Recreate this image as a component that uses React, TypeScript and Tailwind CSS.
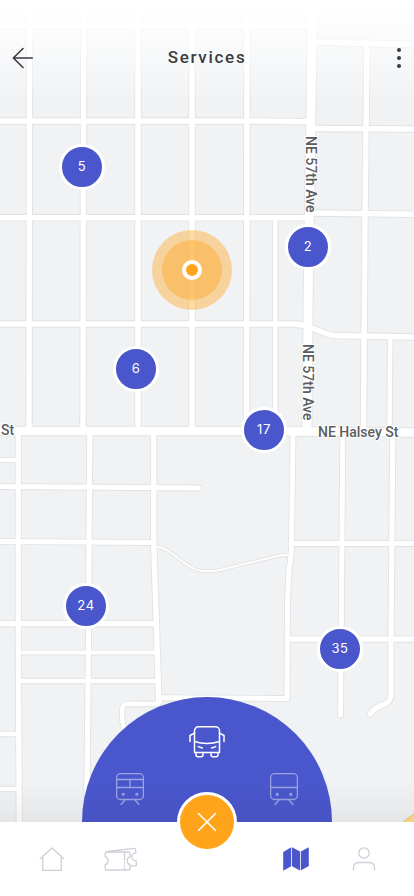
import { useState } from 'react';
import type { ReactNode } from 'react';

type Road = { d: string; width: number };

// Street centre lines, in map units
const ROADS: Road[] = [
  // upper grid, north-south
  { d: 'M29.5 0L29 431', width: 5.5 },
  { d: 'M83.7 0L83 431', width: 5.5 },
  { d: 'M138 0V431', width: 5.5 },
  { d: 'M192 0V431', width: 5.5 },
  { d: 'M247 0L246.5 431', width: 5.5 },
  { d: 'M275.2 218V431', width: 4.5 },
  { d: 'M367 43L365 215L363.5 432', width: 5.5 },
  { d: 'M390.2 337L389.5 432', width: 4.5 },
  { d: 'M312.5 0L311 110L308.5 260L307 431', width: 9 },
  // upper grid, east-west
  { d: 'M0 25.6H312', width: 5.5 },
  { d: 'M312 42L414 44.5', width: 5.5 },
  { d: 'M0 121H250L310 121.8', width: 5.5 },
  { d: 'M310 128.5L414 129', width: 5.5 },
  { d: 'M0 217.7H310', width: 5.5 },
  { d: 'M310 213L414 214.3', width: 5.5 },
  { d: 'M0 324H290Q304 324 312 328L326 333.5Q330 335.3 335 335.4L414 337', width: 5.5 },
  { d: 'M0 431L250 431L414 432.5', width: 8.5 },
  // lower left
  { d: 'M18.3 431V640L19.2 822', width: 5.2 },
  { d: 'M89.8 431L88.3 660L86.6 822', width: 5.2 },
  { d: 'M153.5 431L153.8 545L157.2 650L158.8 702', width: 5.5 },
  { d: 'M0 460H18', width: 3.8 },
  { d: 'M0 486.5L199 488', width: 5 },
  { d: 'M0 541.4L154 542.6', width: 5 },
  { d: 'M0 623.7H156', width: 5.2 },
  { d: 'M18 652.6H157', width: 4 },
  { d: 'M18 681H158', width: 4.5 },
  { d: 'M0 734H19', width: 4.5 },
  { d: 'M0 789H19', width: 4.5 },
  { d: 'M124 728Q121 718 122.5 708Q123 704 127 703.8L158 704', width: 4.5 },
  // lower right
  { d: 'M293 434L291.4 548Q291.4 556 289 570L287.5 600L287 698.5L160 697.8', width: 5 },
  { d: 'M342.8 434L340.5 715.5', width: 5 },
  { d: 'M392.8 434L391 640V694Q391 702 384 704.5Q375 707 370 714', width: 5.2 },
  { d: 'M291 543.6H414', width: 5 },
  { d: 'M288 639.2H414', width: 5.2 },
  // footpath
  { d: 'M156 547.4Q162 546.5 171 553L186 564Q197 572 208 571.3Q216 571.5 226 568.5L281 555.3L290 555', width: 2 },
];

const PINS = [
  { count: 5, x: 82, y: 167 },
  { count: 2, x: 308, y: 247 },
  { count: 6, x: 136, y: 369 },
  { count: 17, x: 264, y: 430 },
  { count: 24, x: 86, y: 606 },
  { count: 35, x: 340, y: 649 },
];

const MAP_WIDTH = 414;
const MAP_HEIGHT = 822;

function place(x: number, y: number) {
  return { left: `${(x / MAP_WIDTH) * 100}%`, top: `${(y / MAP_HEIGHT) * 100}%` };
}

function StreetMap() {
  return (
    <svg
      className="absolute inset-0 h-full w-full"
      viewBox="0 0 414 822"
      preserveAspectRatio="xMidYMid slice"
      fill="none"
      strokeLinecap="round"
      strokeLinejoin="round"
      aria-hidden="true"
    >
      <rect width="414" height="822" fill="#f0f2f4" />
      <g stroke="#e0e2e4">
        {ROADS.map((road) => (
          <path key={road.d} d={road.d} strokeWidth={road.width + 1.8} />
        ))}
      </g>
      <g stroke="#ffffff">
        {ROADS.map((road) => (
          <path key={road.d} d={road.d} strokeWidth={road.width} />
        ))}
      </g>
      <path d="M402 823L415 813V823Z" fill="#fbdf8f" stroke="#efc35c" />
      <g
        className="font-[Roboto,sans-serif] text-[14px] font-medium"
        fill="#5a5d61"
        stroke="#ffffff"
        strokeWidth="2"
        paintOrder="stroke"
      >
        <text transform="translate(306 136) rotate(90)">NE 57th Ave</text>
        <text transform="translate(303 344) rotate(90)">NE 57th Ave</text>
        <text x="318" y="437">NE Halsey St</text>
        <text x="1" y="435">St</text>
      </g>
    </svg>
  );
}

function CurrentLocation() {
  return (
    <div
      className="absolute flex size-20 -translate-1/2 items-center justify-center rounded-full bg-[#ffa41b]/40"
      style={place(192, 270)}
    >
      <div className="flex size-15 items-center justify-center rounded-full bg-[#ffa41b]/40">
        <div className="size-5 rounded-full border-4 border-white bg-[#ffa41b]" />
      </div>
    </div>
  );
}

function BusIcon() {
  return (
    <svg width="36" height="32" viewBox="0 0 36 32" fill="none" stroke="currentColor" strokeWidth="1.5" strokeLinecap="round" strokeLinejoin="round">
      <path d="M5.5 26.5V4.8A4 4 0 0 1 9.5.8h17a4 4 0 0 1 4 4v21.7z" />
      <path d="M5.5 15.5Q18 19.5 30.5 15.5" />
      <path d="M5.5 7.2L1 9.5V15.5M30.5 7.2L35 9.5V15.5" />
      <path d="M9.3 20.6l4 1.4M26.7 20.6l-4 1.4" />
      <path d="M7 26.5v2.3a2 2 0 0 0 2 2h3a2 2 0 0 0 2-2v-2.3M22 26.5v2.3a2 2 0 0 0 2 2h3a2 2 0 0 0 2-2v-2.3" />
    </svg>
  );
}

function TramIcon({ split = false }: { split?: boolean }) {
  return (
    <svg width="28" height="32" viewBox="0 0 28 32" fill="none" stroke="currentColor" strokeWidth="1.3" strokeLinecap="round">
      <rect x=".6" y=".7" width="26.8" height="25.8" rx="4" />
      <path d="M.6 14.5h26.8" />
      {split && <path d="M.6 6.5h26.8M14 6.5v8" />}
      <path d="M9 27l-4 4.5M19 27l4 4.5" />
      <circle cx="7.2" cy="21.2" r="1.5" fill="currentColor" stroke="none" />
      <circle cx="20.8" cy="21.2" r="1.5" fill="currentColor" stroke="none" />
    </svg>
  );
}

function HomeIcon() {
  return (
    <svg width="26" height="24" viewBox="0 0 26 24" fill="none" stroke="currentColor" strokeWidth="1.3" strokeLinecap="round" strokeLinejoin="round">
      <path d="M1.2 11.7L13 .9l11.8 10.8M3.7 9.5v13.8h18.6V9.5" />
    </svg>
  );
}

function TicketsIcon() {
  return (
    <svg width="34" height="24" viewBox="0 0 34 24" fill="none" stroke="currentColor" strokeWidth="1.3" strokeLinecap="round" strokeLinejoin="round">
      <path d="M3.5 5h22.2a1.3 1.3 0 0 1 1.3 1.3v3.4a4.2 4.2 0 0 0 0 8v4a1.3 1.3 0 0 1-1.3 1.3H3.5a1.3 1.3 0 0 1-1.3-1.3v-4a4.2 4.2 0 0 0 0-8V6.3A1.3 1.3 0 0 1 3.5 5z" />
      <path d="M4.5 4.5L31.3 1.3a1.2 1.2 0 0 1 1.3 1l.3 3.5a4 4 0 0 0 .2 8l.3 3.6a1.2 1.2 0 0 1-1 1.3l-4.8.5" />
      <path d="M21.5 5.5v7.5M21.5 15.3v.7M21.5 18.2v.7M21.5 21v1.3" />
    </svg>
  );
}

function MapIcon() {
  return (
    <svg width="26" height="24" viewBox="0 0 26 24" fill="currentColor">
      <path d="M.2 5L8.2.2v19L.2 23.8zM9 .2l8 4.4v19l-8-4.4zM17.8 4.6l8-4.4v18.7l-8 4.7z" />
    </svg>
  );
}

function UserIcon() {
  return (
    <svg width="24" height="24" viewBox="0 0 24 24" fill="none" stroke="currentColor" strokeWidth="1.3" strokeLinecap="round">
      <circle cx="12" cy="6" r="5.2" />
      <path d="M1.5 23.2v-2.7a5 5 0 0 1 5-5h11a5 5 0 0 1 5 5v2.7" />
    </svg>
  );
}

function NavButton({ label, active = false, children }: { label: string; active?: boolean; children: ReactNode }) {
  return (
    <button
      aria-label={label}
      aria-current={active ? 'page' : undefined}
      className={`flex size-10 items-center justify-center ${active ? 'text-[#4a57cc]' : 'text-[#cfced9]'}`}
    >
      {children}
    </button>
  );
}

export default function App() {
  const [open, setOpen] = useState(true);
  const [mode, setMode] = useState('bus');

  return (
    <div className="flex min-h-screen flex-col bg-white font-[Roboto,sans-serif]">
      <main className="relative flex-1 overflow-hidden bg-[#f0f2f4]">
        <StreetMap />

        <CurrentLocation />
        {PINS.map((pin) => (
          <button
            key={pin.count}
            className="absolute flex size-[46px] -translate-1/2 items-center justify-center rounded-full border-3 border-white bg-[#4a57cc] font-[Inter,sans-serif] text-[13px] tracking-wider text-white"
            style={place(pin.x, pin.y)}
          >
            {pin.count}
          </button>
        ))}

        {/* Header */}
        <header className="relative flex h-24 items-center justify-between bg-linear-to-b from-white from-10% to-white/10 px-3 pt-5 text-[#3b3b40]">
          <button aria-label="Back">
            <svg width="22" height="22" viewBox="0 0 22 22" fill="none" stroke="currentColor" strokeWidth="1.6" strokeLinecap="round" strokeLinejoin="round">
              <path d="M20.3 11H1.3M11 1.5L1.3 11l9.7 9.5" />
            </svg>
          </button>
          <h1 className="text-[17px] font-medium tracking-widest">Services</h1>
          <button aria-label="More options" className="flex w-[22px] justify-end">
            <svg width="6" height="20" viewBox="0 0 6 20" fill="currentColor">
              <circle cx="3" cy="2" r="2" />
              <circle cx="3" cy="10" r="2" />
              <circle cx="3" cy="18" r="2" />
            </svg>
          </button>
        </header>

        {/* Transport picker */}
        {open && (
          <div className="absolute bottom-0 left-1/2 flex h-[125px] w-[250px] -translate-x-1/2 flex-col items-center rounded-t-full bg-[#4a57cc] pt-[29px] text-white">
            <button
              aria-label="Bus"
              aria-pressed={mode === 'bus'}
              onClick={() => setMode('bus')}
              className={mode === 'bus' ? '' : 'opacity-45'}
            >
              <BusIcon />
            </button>
            <div className="mt-[15px] flex w-full justify-between px-[34px]">
              <button
                aria-label="Tram"
                aria-pressed={mode === 'tram'}
                onClick={() => setMode('tram')}
                className={mode === 'tram' ? '' : 'opacity-45'}
              >
                <TramIcon split />
              </button>
              <button
                aria-label="Train"
                aria-pressed={mode === 'train'}
                onClick={() => setMode('train')}
                className={mode === 'train' ? '' : 'opacity-45'}
              >
                <TramIcon />
              </button>
            </div>
          </div>
        )}
        <div className="pointer-events-none absolute inset-x-0 bottom-0 h-10 bg-linear-to-t from-black/5 to-transparent" />
      </main>

      {/* Tab bar */}
      <nav className="relative flex h-[74px] items-center justify-between bg-white pr-[30px] pl-8">
        <div className="flex gap-7">
          <NavButton label="Home"><HomeIcon /></NavButton>
          <NavButton label="Tickets"><TicketsIcon /></NavButton>
        </div>
        <button
          aria-label={open ? 'Close transport picker' : 'Open transport picker'}
          onClick={() => setOpen(!open)}
          className="absolute top-0 left-1/2 flex size-15 -translate-1/2 items-center justify-center rounded-full border-3 border-white bg-[#ffa41b] text-white"
        >
          <svg width="20" height="20" viewBox="0 0 20 20" fill="none" stroke="currentColor" strokeWidth="1.6" strokeLinecap="round" className={open ? '' : 'rotate-45'}>
            <path d="M1.5 1.5l17 17M18.5 1.5l-17 17" />
          </svg>
        </button>
        <div className="flex gap-7">
          <NavButton label="Map" active><MapIcon /></NavButton>
          <NavButton label="Profile"><UserIcon /></NavButton>
        </div>
      </nav>
    </div>
  );
}
